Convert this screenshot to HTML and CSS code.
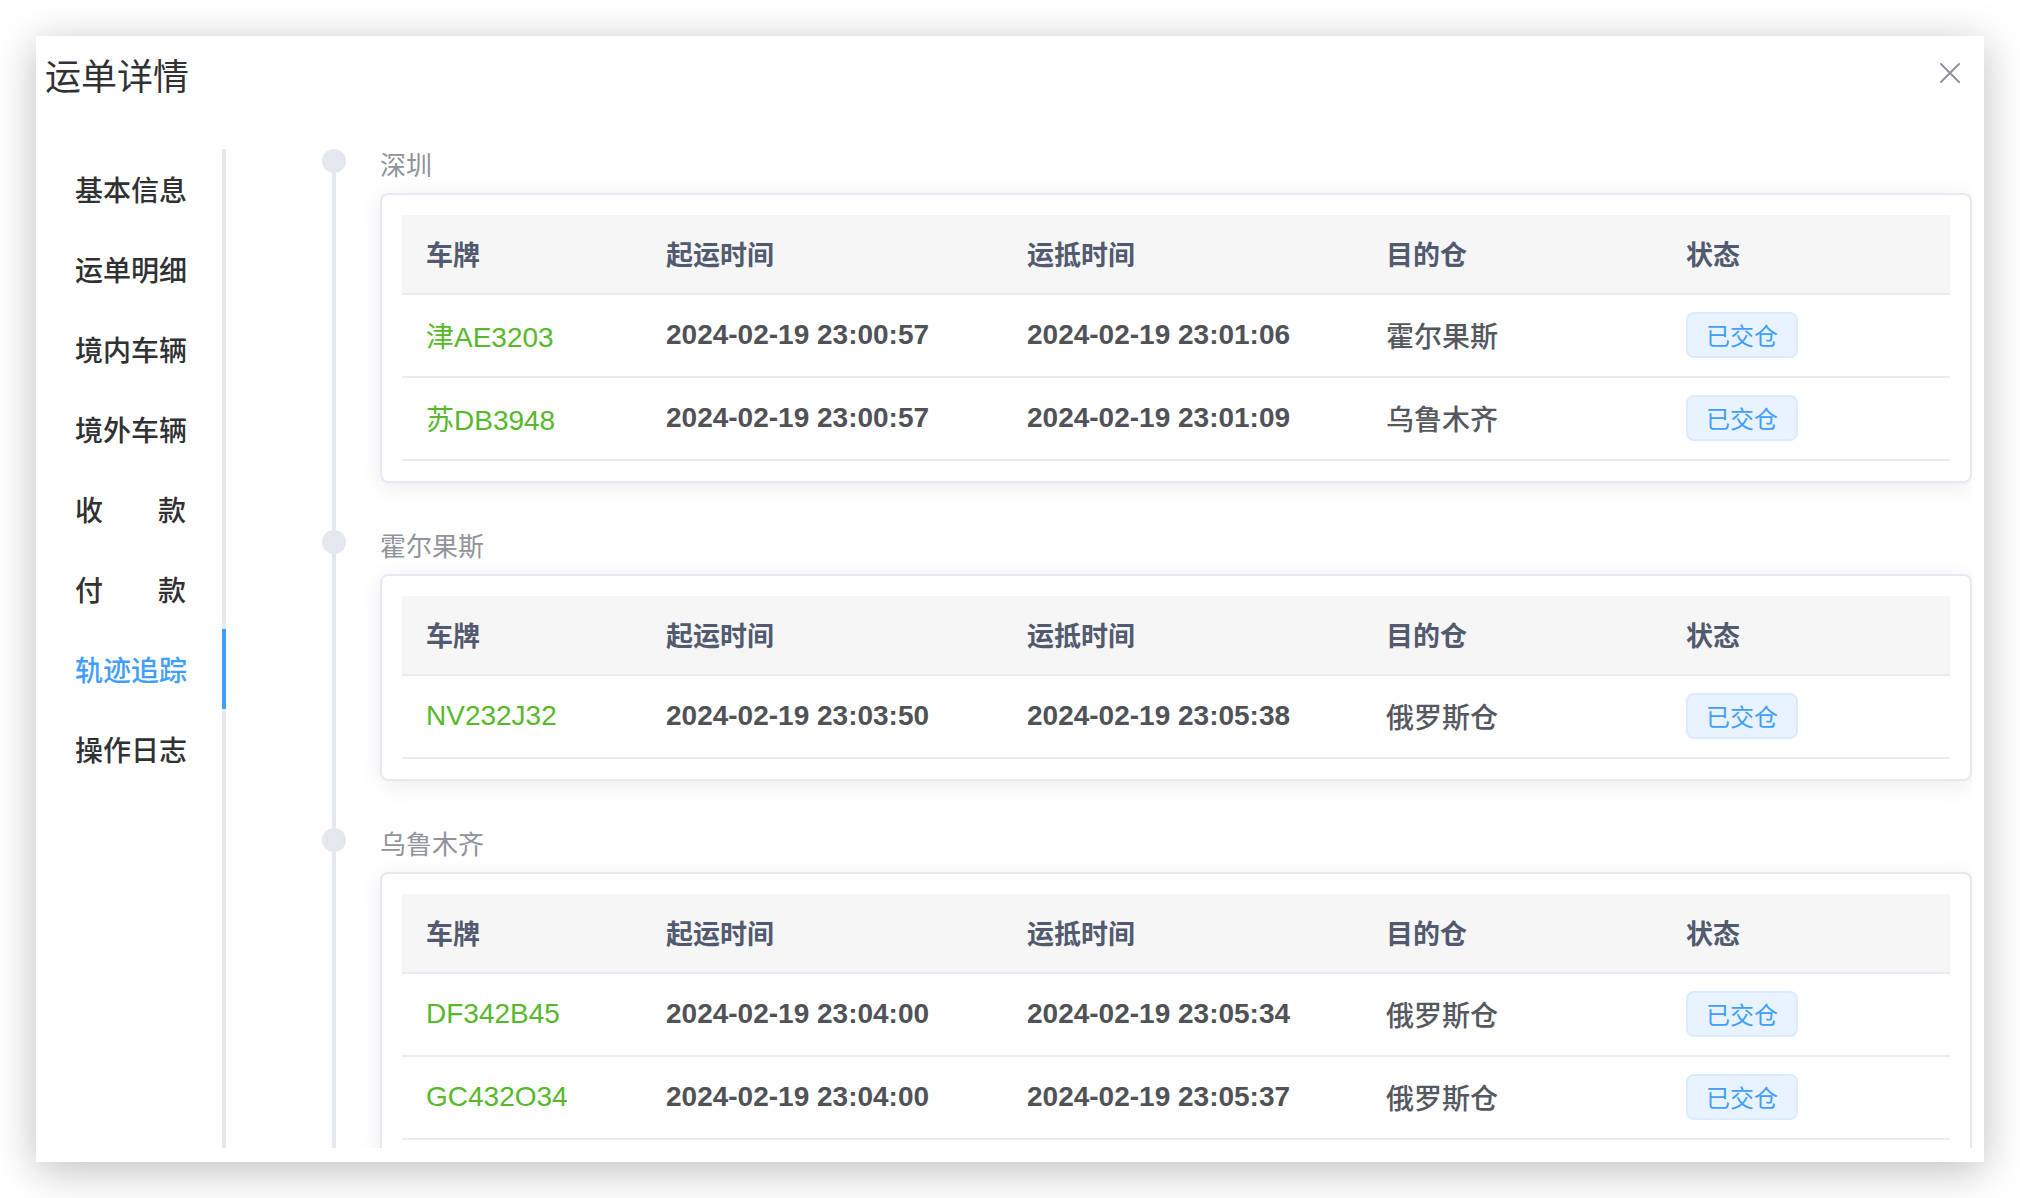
FILE: index.html
```html
<!DOCTYPE html>
<html lang="zh-CN">
<head>
<meta charset="utf-8">
<title>运单详情</title>
<link rel="stylesheet" href="styles.css">
</head>
<body>
<div class="page">
  <div class="dialog">
    <div class="dialog-header">
      <span class="dialog-title">运单详情</span>
      <button class="close-btn" aria-label="关闭">
        <svg width="20" height="20" viewBox="0 0 20 20"><path d="M1 1 L19 19 M19 1 L1 19" stroke="#8f929a" stroke-width="2" fill="none" stroke-linecap="round"/></svg>
      </button>
    </div>
    <div class="dialog-body">
      <nav class="tabs-nav">
        <div class="tab-item">基本信息</div>
        <div class="tab-item">运单明细</div>
        <div class="tab-item">境内车辆</div>
        <div class="tab-item">境外车辆</div>
        <div class="tab-item">收款</div>
        <div class="tab-item">付款</div>
        <div class="tab-item active">轨迹追踪</div>
        <div class="tab-item">操作日志</div>
        <div class="tab-fill"></div>
      </nav>
      <div class="tab-pane">
        <div class="timeline">
          <div class="tl-item">
            <div class="tl-rail"><span class="tl-dot"></span><span class="tl-line"></span></div>
            <div class="tl-content">
              <div class="tl-stamp">深圳</div>
              <div class="card">
                <table class="grid">
                  <colgroup><col class="c1"><col class="c2"><col class="c3"><col class="c4"><col></colgroup>
                  <thead><tr><th>车牌</th><th>起运时间</th><th>运抵时间</th><th>目的仓</th><th>状态</th></tr></thead>
                  <tbody>
                    <tr><td class="plate">津AE3203</td><td class="time">2024-02-19 23:00:57</td><td class="time">2024-02-19 23:01:06</td><td class="dest">霍尔果斯</td><td><span class="tag">已交仓</span></td></tr>
                    <tr><td class="plate">苏DB3948</td><td class="time">2024-02-19 23:00:57</td><td class="time">2024-02-19 23:01:09</td><td class="dest">乌鲁木齐</td><td><span class="tag">已交仓</span></td></tr>
                  </tbody>
                </table>
              </div>
            </div>
          </div>
          <div class="tl-item">
            <div class="tl-rail"><span class="tl-dot"></span><span class="tl-line"></span></div>
            <div class="tl-content">
              <div class="tl-stamp">霍尔果斯</div>
              <div class="card">
                <table class="grid">
                  <colgroup><col class="c1"><col class="c2"><col class="c3"><col class="c4"><col></colgroup>
                  <thead><tr><th>车牌</th><th>起运时间</th><th>运抵时间</th><th>目的仓</th><th>状态</th></tr></thead>
                  <tbody>
                    <tr><td class="plate">NV232J32</td><td class="time">2024-02-19 23:03:50</td><td class="time">2024-02-19 23:05:38</td><td class="dest">俄罗斯仓</td><td><span class="tag">已交仓</span></td></tr>
                  </tbody>
                </table>
              </div>
            </div>
          </div>
          <div class="tl-item">
            <div class="tl-rail"><span class="tl-dot"></span><span class="tl-line"></span></div>
            <div class="tl-content">
              <div class="tl-stamp">乌鲁木齐</div>
              <div class="card">
                <table class="grid">
                  <colgroup><col class="c1"><col class="c2"><col class="c3"><col class="c4"><col></colgroup>
                  <thead><tr><th>车牌</th><th>起运时间</th><th>运抵时间</th><th>目的仓</th><th>状态</th></tr></thead>
                  <tbody>
                    <tr><td class="plate">DF342B45</td><td class="time">2024-02-19 23:04:00</td><td class="time">2024-02-19 23:05:34</td><td class="dest">俄罗斯仓</td><td><span class="tag">已交仓</span></td></tr>
                    <tr><td class="plate">GC432O34</td><td class="time">2024-02-19 23:04:00</td><td class="time">2024-02-19 23:05:37</td><td class="dest">俄罗斯仓</td><td><span class="tag">已交仓</span></td></tr>
                  </tbody>
                </table>
              </div>
            </div>
          </div>
        </div>
      </div>
    </div>
  </div>
</div>
</body>
</html>
```

FILE: styles.css
```css
* { box-sizing: border-box; }
html, body {
  margin: 0;
  padding: 0;
  background: #ffffff;
}
body {
  font-family: "Liberation Sans", "Noto Sans CJK SC", sans-serif;
  color: #303133;
}
.page {
  width: 2020px;
  height: 1198px;
  padding: 36px 36px 0 36px;
  overflow: hidden;
}
.dialog {
  width: 1948px;
  height: 1126px;
  background: #ffffff;
  box-shadow: 0 8px 40px rgba(0, 0, 0, 0.26);
  display: flex;
  flex-direction: column;
}
.dialog-header {
  display: flex;
  justify-content: space-between;
  align-items: flex-start;
  padding: 18px 24px 0 9px;
  height: 60px;
}
.dialog-title {
  font-family: "Noto Sans CJK SC", sans-serif;
  font-size: 36px;
  line-height: 40px;
  color: #303133;
}
.close-btn {
  border: 0;
  background: transparent;
  padding: 0;
  margin-top: 9px;
  width: 20px;
  height: 20px;
  display: flex;
}
.dialog-body {
  flex: 1;
  display: flex;
  padding: 43px 12px 14px 39px;
  min-height: 0;
}
.tabs-nav {
  display: flex;
  flex-direction: column;
  width: 151px;
  flex: none;
  margin-top: 10px;
}
.tab-item {
  height: 80px;
  line-height: 80px;
  padding-right: 36px;
  border-right: 4px solid #e4e7ed;
  font-family: "Noto Sans CJK SC", sans-serif;
  font-weight: 500;
  font-size: 28px;
  color: #303133;
  white-space: nowrap;
  text-align: justify;
  text-align-last: justify;
}
.tab-item.active {
  color: #409eff;
  border-right-color: #409eff;
}
.tab-fill {
  flex: 1;
  border-right: 4px solid #e4e7ed;
}
.tab-pane {
  flex: 1;
  padding-left: 96px;
  padding-top: 10px;
  overflow: hidden;
  height: 1009px;
}
.timeline {
  display: flex;
  flex-direction: column;
}
.tl-item {
  display: flex;
}
.tl-rail {
  width: 24px;
  flex: none;
  display: flex;
  flex-direction: column;
  align-items: center;
}
.tl-dot {
  width: 24px;
  height: 24px;
  border-radius: 50%;
  background: #e4e7ed;
  flex: none;
}
.tl-line {
  flex: 1;
  width: 4px;
  background: #e4e7ed;
}
.tl-content {
  flex: 1;
  padding-left: 34px;
  padding-bottom: 47px;
}
.tl-stamp {
  font-family: "Noto Sans CJK SC", sans-serif;
  font-size: 26px;
  line-height: 30px;
  margin-bottom: 14px;
  color: #909399;
}
.card {
  border: 2px solid #e6e9ef;
  border-radius: 8px;
  background: #ffffff;
  box-shadow: 0 4px 24px rgba(0, 0, 0, 0.08);
  padding: 20px;
}
.grid {
  width: 100%;
  border-collapse: collapse;
  table-layout: fixed;
}
.grid col.c1 { width: 240px; }
.grid col.c2 { width: 361px; }
.grid col.c3 { width: 359px; }
.grid col.c4 { width: 300px; }
.grid th {
  height: 79px;
  background: #f6f6f7;
  border-bottom: 2px solid #e8ebf2;
  text-align: left;
  padding: 0 0 2px 24px;
  font-family: "Noto Sans CJK SC", sans-serif;
  font-size: 27px;
  font-weight: 700;
  color: #515a6e;
}
.grid td {
  height: 83px;
  border-bottom: 2px solid #e8ebf2;
  padding: 0 0 2px 24px;
  font-size: 28px;
  color: #5a5d63;
  white-space: nowrap;
}
.grid td.plate {
  color: #56b82a;
}
.grid td.time {
  font-weight: 700;
  color: #505257;
}
.grid td.dest {
  font-family: "Noto Sans CJK SC", sans-serif;
  font-weight: 500;
  color: #55585e;
}
.tag {
  display: inline-block;
  height: 46px;
  line-height: 42px;
  padding: 0 18px;
  border: 2px solid #d9ecff;
  border-radius: 8px;
  background: #e8f3ff;
  color: #409eff;
  font-family: "Noto Sans CJK SC", sans-serif;
  font-size: 24px;
  vertical-align: middle;
}
```
